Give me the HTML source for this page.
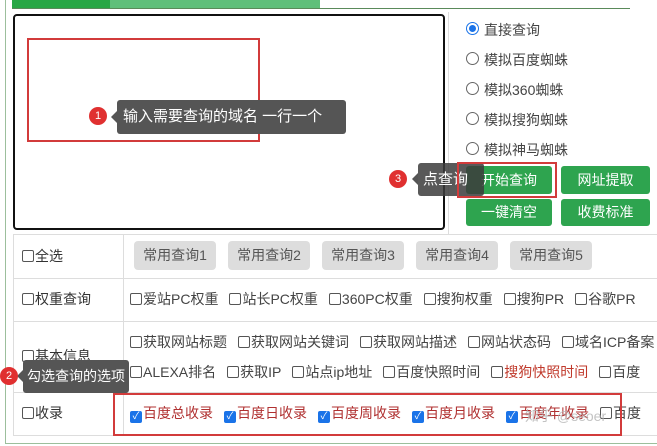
<!DOCTYPE html>
<html><head><meta charset="utf-8"><style>
*{box-sizing:border-box;margin:0;padding:0}
body{width:657px;height:446px;overflow:hidden;background:#fff;font-family:"Liberation Sans","Noto Sans CJK SC",sans-serif;font-size:14px;color:#333;position:relative}
.a{position:absolute}
.btn{position:absolute;background:#2ea44f;color:#fff;border-radius:3px;text-align:center;font-size:14px}
.gb{position:absolute;background:#ddd;border-radius:4px;width:82px;height:29px;line-height:29px;text-align:center;color:#555;top:241px}
.cb{display:inline-block;width:12px;height:12px;border:1px solid #555;border-radius:2px;vertical-align:-1px;margin-right:1px;background:#fff}
.ck{display:inline-block;width:12px;height:12px;background:#1a73e8;border-radius:2px;vertical-align:-1px;margin-right:1px;color:#fff;font-size:10px;line-height:12px;text-align:center}
.row{position:absolute;left:130px;white-space:nowrap;color:#444;line-height:16px}
.row span.i{margin-right:11px}
.radio{position:absolute;left:466px;width:13px;height:13px;border:1px solid #666;border-radius:50%}
.rt{position:absolute;left:484px;color:#444;line-height:16px}
.tip{position:absolute;background:#555;color:#fff;border-radius:3px;font-size:15px;white-space:nowrap}
.num{position:absolute;width:18px;height:18px;border-radius:50%;background:#e03030;color:#fff;font-size:11px;text-align:center;line-height:18px}
.red{position:absolute;border:2px solid #d23b3b}
.lab{position:absolute;left:22px;line-height:16px}
</style></head><body>
<div class="a" style="left:5px;top:0;width:1px;height:444px;background:#9cbf9c"></div>
<div class="a" style="left:5px;top:443px;width:652px;height:1px;background:#9cbf9c"></div>
<div class="a" style="left:12px;top:0;width:98px;height:8px;background:#28a745"></div>
<div class="a" style="left:110px;top:0;width:210px;height:8px;background:#5fbf7a"></div>
<div class="a" style="left:12px;top:8px;width:618px;height:1px;background:#5a8a5a"></div>
<div class="a" style="left:448px;top:12px;width:1px;height:222px;background:#ddd"></div>
<div class="a" style="left:13px;top:14px;width:432px;height:216px;border:2px solid #111;border-radius:4px"></div>

<div class="radio" style="top:22px;border-color:#1a73e8;"><div class="a" style="left:2px;top:2px;width:7px;height:7px;border-radius:50%;background:#1a73e8"></div></div>
<div class="rt" style="top:22px">直接查询</div>
<div class="radio" style="top:52px"></div><div class="rt" style="top:52px">模拟百度蜘蛛</div>
<div class="radio" style="top:82px"></div><div class="rt" style="top:82px">模拟360蜘蛛</div>
<div class="radio" style="top:112px"></div><div class="rt" style="top:112px">模拟搜狗蜘蛛</div>
<div class="radio" style="top:142px"></div><div class="rt" style="top:142px">模拟神马蜘蛛</div>

<div class="btn" style="left:466px;top:166px;width:86px;height:28px;line-height:28px">开始查询</div>
<div class="btn" style="left:561px;top:166px;width:89px;height:28px;line-height:28px">网址提取</div>
<div class="btn" style="left:466px;top:199px;width:86px;height:27px;line-height:27px">一键清空</div>
<div class="btn" style="left:561px;top:199px;width:89px;height:27px;line-height:27px">收费标准</div>

<div class="a" style="left:13px;top:234px;width:644px;height:1px;background:#ddd"></div>
<div class="a" style="left:13px;top:278px;width:644px;height:1px;background:#ddd"></div>
<div class="a" style="left:13px;top:321px;width:644px;height:1px;background:#ddd"></div>
<div class="a" style="left:13px;top:392px;width:644px;height:1px;background:#ddd"></div>
<div class="a" style="left:13px;top:435px;width:644px;height:1px;background:#ddd"></div>
<div class="a" style="left:13px;top:234px;width:1px;height:202px;background:#ddd"></div>
<div class="a" style="left:123px;top:234px;width:1px;height:202px;background:#ddd"></div>

<div class="lab" style="top:248px"><span class="cb"></span>全选</div>
<div class="lab" style="top:291px"><span class="cb"></span>权重查询</div>
<div class="lab" style="top:348px"><span class="cb"></span>基本信息</div>
<div class="lab" style="top:405px"><span class="cb"></span>收录</div>

<div class="gb" style="left:134px">常用查询1</div>
<div class="gb" style="left:228px">常用查询2</div>
<div class="gb" style="left:322px">常用查询3</div>
<div class="gb" style="left:416px">常用查询4</div>
<div class="gb" style="left:510px">常用查询5</div>

<div class="row" style="top:291px"><span class="i"><span class="cb"></span>爱站PC权重</span><span class="i"><span class="cb"></span>站长PC权重</span><span class="i"><span class="cb"></span>360PC权重</span><span class="i"><span class="cb"></span>搜狗权重</span><span class="i"><span class="cb"></span>搜狗PR</span><span class="i"><span class="cb"></span>谷歌PR</span></div>
<div class="row" style="top:334px"><span class="i"><span class="cb"></span>获取网站标题</span><span class="i"><span class="cb"></span>获取网站关键词</span><span class="i"><span class="cb"></span>获取网站描述</span><span class="i"><span class="cb"></span>网站状态码</span><span class="i"><span class="cb"></span>域名ICP备案</span></div>
<div class="row" style="top:364px"><span class="i"><span class="cb"></span>ALEXA排名</span><span class="i"><span class="cb"></span>获取IP</span><span class="i"><span class="cb"></span>站点ip地址</span><span class="i"><span class="cb"></span>百度快照时间</span><span class="i"><span class="cb"></span><span style="color:#c0392b">搜狗快照时间</span></span><span class="i"><span class="cb"></span>百度</span></div>
<div class="row" style="top:405px;color:#b03030"><span class="i"><span class="ck">✓</span>百度总收录</span><span class="i"><span class="ck">✓</span>百度日收录</span><span class="i"><span class="ck">✓</span>百度周收录</span><span class="i"><span class="ck">✓</span>百度月收录</span><span class="i"><span class="ck">✓</span>百度年收录</span><span class="i" style="color:#444"><span class="cb"></span>百度</span></div>

<div class="red" style="left:27px;top:38px;width:233px;height:104px"></div>
<div class="tip" style="left:117px;top:100px;width:229px;height:34px;line-height:34px;padding-left:6px">输入需要查询的域名 一行一个</div>
<div class="a" style="left:111px;top:111px;border-right:6px solid #555;border-top:6px solid transparent;border-bottom:6px solid transparent"></div>
<div class="num" style="left:89px;top:107px">1</div>

<div class="tip" style="left:418px;top:163px;width:66px;height:33px;line-height:33px;padding-left:5px;background:rgba(60,60,60,.85)">点查询</div>
<div class="a" style="left:412px;top:173px;border-right:6px solid #555;border-top:6px solid transparent;border-bottom:6px solid transparent"></div>
<div class="num" style="left:389px;top:170px">3</div>
<div class="red" style="left:457px;top:162px;width:100px;height:36px"></div>

<div class="tip" style="left:23px;top:360px;width:106px;height:33px;line-height:33px;padding-left:4px;font-size:14px">勾选查询的选项</div>
<div class="a" style="left:17px;top:370px;border-right:6px solid #555;border-top:6px solid transparent;border-bottom:6px solid transparent"></div>
<div class="num" style="left:0px;top:367px">2</div>
<div class="red" style="left:113px;top:393px;width:509px;height:43px"></div>
<div class="a" style="left:525px;top:406px;color:rgba(180,180,180,.8);font-size:14px">知乎 @seoer</div>
</body></html>
